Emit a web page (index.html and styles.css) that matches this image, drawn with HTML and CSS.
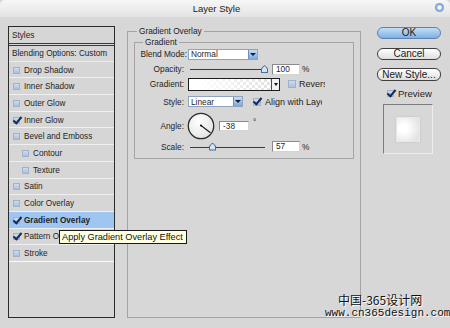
FILE: index.html
```html
<!DOCTYPE html>
<html lang="en">
<head>
    <meta charset="UTF-8">
    <title>Layer Style</title>
    <link rel="stylesheet" href="styles.css">
</head>
<body>
<div class="dialog">
    <div class="titlebar">
        <span class="title">Layer Style</span>
        <span class="close"></span>
    </div>
    <div class="content">
        <ul class="styles">
            <li class="head">Styles</li>
            <li class="blend">Blending Options: Custom</li>
            <li><i class="cb"></i>Drop Shadow</li>
            <li><i class="cb"></i>Inner Shadow</li>
            <li><i class="cb"></i>Outer Glow</li>
            <li><i class="cb on"></i>Inner Glow</li>
            <li><i class="cb"></i>Bevel and Emboss</li>
            <li class="sub"><i class="cb"></i>Contour</li>
            <li class="sub"><i class="cb"></i>Texture</li>
            <li><i class="cb"></i>Satin</li>
            <li><i class="cb"></i>Color Overlay</li>
            <li class="sel"><i class="cb on"></i>Gradient Overlay</li>
            <li><i class="cb on"></i>Pattern Overlay</li>
            <li class="last"><i class="cb"></i>Stroke</li>
        </ul>

        <fieldset class="group outer">
            <legend>Gradient Overlay</legend>
            <fieldset class="group inner">
                <legend>Gradient</legend>
                <div class="row r1">
                    <label>Blend Mode:</label>
                    <div class="select w70">Normal<span class="arrow"></span></div>
                </div>
                <div class="row r2">
                    <label>Opacity:</label>
                    <div class="slider"><span class="thumb" style="left:73px"></span></div>
                    <span class="num">100</span><span class="unit">%</span>
                </div>
                <div class="row r3">
                    <label>Gradient:</label>
                    <div class="swatch"><span class="fill"></span><span class="drop"></span></div>
                    <i class="cb big"></i><span class="clip w26">Reverse</span>
                </div>
                <div class="row r4">
                    <label>Style:</label>
                    <div class="select w55">Linear<span class="arrow"></span></div>
                    <i class="cb big on"></i><span class="clip w57">Align with Layer</span>
                </div>
                <div class="row r5">
                    <label>Angle:</label>
                    <svg class="dial" width="28" height="28" viewBox="0 0 28 28">
                        <defs>
                            <radialGradient id="dg" cx="40%" cy="35%" r="70%">
                                <stop offset="0" stop-color="#ffffff"/>
                                <stop offset="1" stop-color="#e2e2e2"/>
                            </radialGradient>
                        </defs>
                        <circle cx="14" cy="14" r="12.7" fill="url(#dg)" stroke="#2c2c2c" stroke-width="1.3"/>
                        <line x1="14" y1="13.5" x2="23.5" y2="20.8" stroke="#1a1a1a" stroke-width="1.1"/>
                        <circle cx="14" cy="13.5" r="1.1" fill="#111"/>
                    </svg>
                    <span class="num deg">-38</span><span class="unit up">&deg;</span>
                </div>
                <div class="row r6">
                    <label>Scale:</label>
                    <div class="slider"><span class="thumb" style="left:21px"></span></div>
                    <span class="num">57</span><span class="unit">%</span>
                </div>
            </fieldset>
        </fieldset>

        <div class="side">
            <button class="btn ok">OK</button>
            <button class="btn cancel">Cancel</button>
            <button class="btn new">New Style...</button>
            <div class="preview"><i class="cb on"></i>Preview</div>
            <div class="frame"><span class="thumbnail"></span></div>
        </div>
    </div>

    <div class="tip">Apply Gradient Overlay Effect</div>
    <div class="mark">
        <p class="cn">中国-365设计网</p>
        <p class="url">www.cn365design.com</p>
    </div>
</div>
</body>
</html>
```

FILE: styles.css
```css
* {margin:0; padding:0; box-sizing:border-box; list-style:none;}
body {width:450px; height:328px; overflow:hidden; background:#d7d7d7; font-family:"Liberation Sans", Arial, sans-serif; color:#1e1e1e;}
.dialog {position:relative; height:328px; background:#d7d7d7;}

/* title bar */
.titlebar {display:flex; height:17px; background:linear-gradient(#f7f7f7, #e3e3e3); border-radius:5px 5px 0 0;}
.title {flex:1; text-align:center; font-size:9.5px; line-height:17px; color:#222;}
.close {width:9px; height:9px; margin:3px 6px 0 2px; border-radius:50%; background:radial-gradient(circle, #f2f8ff 0 22%, #8fb5e0 45%, #4f7fb8 100%);}

.content {display:flex; height:292px; margin-top:9px; padding-left:8px;}

/* checkbox */
.cb {position:relative; display:block; flex:none; width:7px; height:7px; background:linear-gradient(#cddcee, #a9c1de); border:1px solid #9fb2c9;}
.cb.big {width:8px; height:8px;}
.cb.on::after {content:""; position:absolute; left:1px; top:-3px; width:3px; height:7px; border:solid #142a5c; border-width:0 2px 2px 0; transform:rotate(40deg);}

/* styles list */
.styles {width:107px; border:1px solid #2b2b2b; background:#d6d6d6; font-size:8.2px;}
.styles li {display:flex; align-items:center; gap:4px; height:16.7px; padding:1px 0 0 4px; border-bottom:1px solid #efefef;}
.styles .head {height:18.7px; padding-left:3px; border-bottom:3px double #3a3a3a;}
.styles .blend {height:16px; padding-left:3px; border-bottom-color:#ececec;}
.styles .sub {padding-left:13px;}
.styles .sel {background:#9fc6f3; font-weight:bold;}
.styles .last {border-bottom-color:#fafafa;}

/* group boxes */
.group {border:1px solid #a4a4a4; min-width:0;}
.group legend {font-size:8.3px; line-height:10px; padding:0 2px; color:#222;}
.outer {width:234px; margin-left:12px; padding:0 6px;}
.outer legend {margin-left:3px;}
.inner {margin-top:1px; padding:0 0 4px 0;}
.inner legend {margin-left:8px;}

.row {display:flex; align-items:center; font-size:8.3px;}
.row label {flex:none; width:49px; margin-right:4px; text-align:right;}
.r1 {height:14px;}
.r1 label {width:52px; margin-right:1px;}
.r2 {height:16px;}
.r3 {height:14px;}
.r4 {height:21px;}
.r5 {height:27px;}
.r6 {height:15px;}

.select {display:flex; align-items:center; height:11px; padding-left:2px; background:#fff; border:1px solid #8ea3bf;}
.select.w70 {width:70px;}
.select.w55 {width:55px;}
.select .arrow {display:flex; align-items:center; justify-content:center; margin-left:auto; width:9px; height:100%; background:linear-gradient(#c8ddf6, #7ea8dc); border-left:1px solid #6a8fc2;}
.select .arrow::after {content:""; border:3px solid transparent; border-top:3px solid #0e1e3e; border-bottom:0;}

.slider {position:relative; flex:none; width:78px; height:10px;}
.slider::before {content:""; position:absolute; left:2px; right:1px; top:5px; height:1px; background:#3a3a3a;}
.thumb {position:absolute; top:1px; width:7px; height:8px; background:#4c6b96; clip-path:polygon(50% 0, 100% 45%, 100% 100%, 0 100%, 0 45%);}
.thumb::after {content:""; position:absolute; inset:1px; background:#d3e4f6; clip-path:polygon(50% 0, 100% 45%, 100% 100%, 0 100%, 0 45%);}

.num {width:28px; height:11px; margin-left:6px; padding-left:3px; line-height:9px; background:#fff; border:1px solid; border-color:#8a8a8a #d4d4d4 #d4d4d4 #8a8a8a;}
.num.deg {width:30px; height:10px; margin-left:4px; line-height:8px;}
.unit {margin-left:2px;}
.unit.up {margin-left:4px; align-self:flex-start; margin-top:5px;}

.swatch {display:flex; width:92px; height:13px; border:1px solid #1d1d1d; background:#fff;}
.swatch .fill {flex:1; background:linear-gradient(to right, #fff 10%, rgba(255,255,255,0)), repeating-conic-gradient(#e2e2e2 0 25%, #fff 0 50%) 0 0/6px 6px;}
.swatch .drop {display:flex; align-items:center; justify-content:center; width:8px; border-left:1px solid #4a4a4a; background:#f2f2f2;}
.swatch .drop::after {content:""; border:2.5px solid transparent; border-top:3px solid #111; border-bottom:0;}
.r3 .cb {margin-left:8px;}
.r4 .cb {margin-left:10px;}
.clip {overflow:hidden; white-space:nowrap; font-size:9px;}
.clip.w26 {width:26px; margin-left:3px;}
.clip.w57 {width:57px; margin-left:4px;}
.dial {flex:none; margin-left:-1px;}

/* right column */
.side {display:flex; flex-direction:column; width:64px; margin-left:16px;}
.btn {height:12px; border:1px solid #3f3f3f; border-radius:6px; background:linear-gradient(#ffffff, #dedede); font-family:"Liberation Sans", Arial, sans-serif; font-size:10px; line-height:10px; color:#1a1a1a;}
.ok {margin-top:1px; background:linear-gradient(#c4def7, #7eafe3); border-color:#5d83b1;}
.cancel {margin-top:9px;}
.new {height:13px; margin-top:8px;}
.preview {display:flex; align-items:center; gap:4px; height:11px; margin-top:7px; padding-left:10px; font-size:9.5px;}
.frame {display:flex; align-items:center; justify-content:center; width:50px; height:50px; margin:5px 0 0 6px; border:1px solid; border-color:#7d7d7d #ededed #ededed #7d7d7d;}
.thumbnail {width:24px; height:25px; background:radial-gradient(circle at 30% 45%, #ffffff 20%, #e4e4e4 80%); border:1px solid #e8e8e8; box-shadow:0 0 2px #bdbdbd;}

/* tooltip + watermark overlays */
.tip {position:absolute; left:59px; top:230px; width:128px; height:14px; padding-left:2px; background:#ffffe1; border:1px solid #1a1a1a; font-size:9.2px; line-height:12px; color:#111;}
.mark {position:absolute; left:322px; top:293px; color:#111; text-shadow:1px 1px 0 #fff;}
.mark .cn {margin-left:16px; font-family:"Noto Sans CJK SC", sans-serif; font-size:12px; line-height:14px;}
.mark .url {margin-left:3px; font-family:"Liberation Mono", monospace; font-size:11px; line-height:12px; white-space:nowrap;}
```
